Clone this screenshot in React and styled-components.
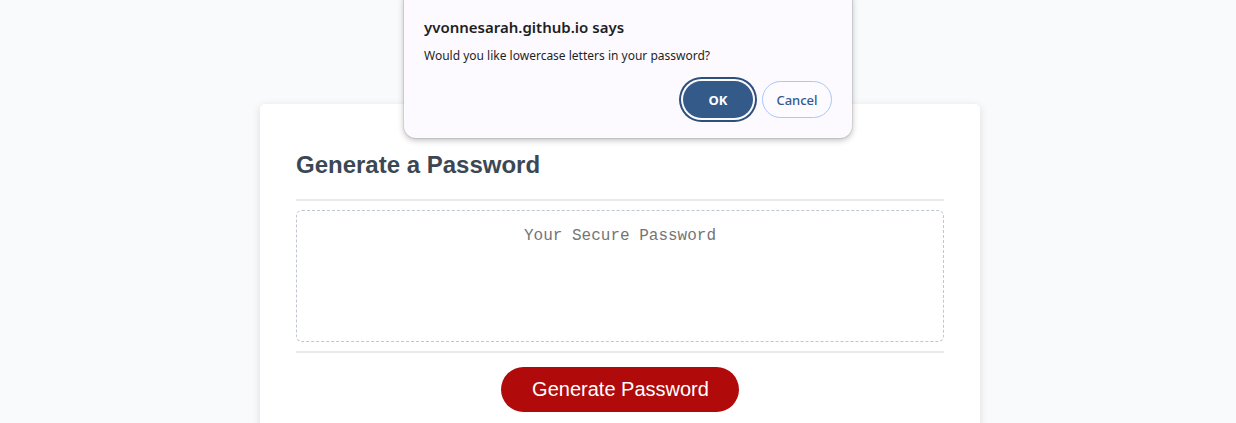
import React from "react";
import styled, { createGlobalStyle } from "styled-components";

const GlobalStyle = createGlobalStyle`
    html, body {
        margin: 0;
        padding: 0;
        background-color: #f9fafb;
        font-family: "Liberation Sans", Arial, sans-serif;
    }
`;

const Page = styled.div`
    position: relative;
    min-height: 423px;
    padding-left: 4px;
    overflow: hidden;
`;

const Card = styled.div`
    width: 720px;
    box-sizing: border-box;
    margin: 104px auto 0;
    padding: 0 36px 30px;
    background-color: #fff;
    border-radius: 5px;
    box-shadow: rgba(0, 0, 0, 0.12) 0px 2px 8px 0px;
    color: #3b4854;
`;

const CardHeader = styled.div`
    padding-top: 47px;
    &::after {
        content: "";
        display: block;
        height: 2px;
        margin-top: 20px;
        background: #e7e9eb;
    }
`;

const Title = styled.h2`
    margin: 0;
    font-size: 24px;
    line-height: 28px;
    font-weight: 700;
`;

const CardBody = styled.div`
    padding: 9px 0;
`;

const Output = styled.textarea`
    display: block;
    width: 100%;
    height: 132px;
    box-sizing: border-box;
    padding: 16px 15px;
    border: 1px dashed #c0c7cf;
    border-radius: 6px;
    resize: none;
    overflow: hidden;
    text-align: center;
    font-family: "Liberation Mono", "Courier New", monospace;
    font-size: 16px;
    color: #333;
    &::placeholder {
        color: #757575;
    }
`;

const CardFooter = styled.div`
    text-align: center;
    &::before {
        content: "";
        display: block;
        height: 2px;
        background: #e7e9eb;
        margin-bottom: 14px;
    }
`;

const GenerateButton = styled.button`
    height: 45px;
    padding: 0 30px 0 31px;
    border: none;
    border-radius: 25px;
    background-color: #b00a0a;
    color: #fff;
    font-family: "Liberation Sans", Arial, sans-serif;
    font-size: 20px;
    line-height: 45px;
    cursor: pointer;
`;

const Dialog = styled.div`
    position: absolute;
    top: -12px;
    left: calc(50% - 214px);
    width: 448px;
    box-sizing: border-box;
    padding: 29px 20px 20px;
    background-color: #fcfaff;
    border-radius: 12px;
    box-shadow: 0 0 0 1px rgba(0, 0, 0, 0.07), 0 2px 6px rgba(0, 0, 0, 0.28);
    font-family: "Noto Sans", "Open Sans", sans-serif;
    color: #1f1f1f;
`;

const DialogTitle = styled.div`
    font-size: 15px;
    line-height: 20px;
    font-weight: 600;
`;

const DialogMessage = styled.div`
    margin-top: 9px;
    font-size: 12px;
    line-height: 20px;
`;

const DialogActions = styled.div`
    display: flex;
    justify-content: flex-end;
    gap: 9px;
    margin-top: 15px;
`;

const DialogButton = styled.button`
    height: 37px;
    width: ${p => (p.primary ? "70px" : "70px")};
    padding: 0;
    border-radius: 19px;
    font-family: "Noto Sans", "Open Sans", sans-serif;
    font-size: 13px;
    font-weight: ${p => (p.primary ? 700 : 500)};
    color: ${p => (p.primary ? "#fff" : "#345a8a")};
    background-color: ${p => (p.primary ? "#345a8a" : "#fdfbff")};
    border: ${p => (p.primary ? "none" : "1px solid #a8c7fa")};
    box-shadow: ${p =>
        p.primary ? "0 0 0 2px #fcfaff, 0 0 0 4px #2d4f7c" : "none"};
    cursor: pointer;
`;

export default function App() {
    return (
        <Page>
            <GlobalStyle />
            <Card>
                <CardHeader>
                    <Title>Generate a Password</Title>
                </CardHeader>
                <CardBody>
                    <Output
                        readOnly
                        placeholder="Your Secure Password"
                        aria-label="Generated Password"
                    />
                </CardBody>
                <CardFooter>
                    <GenerateButton>Generate Password</GenerateButton>
                </CardFooter>
            </Card>

            <Dialog role="alertdialog">
                <DialogTitle>yvonnesarah.github.io says</DialogTitle>
                <DialogMessage>
                    Would you like lowercase letters in your password?
                </DialogMessage>
                <DialogActions>
                    <DialogButton primary>OK</DialogButton>
                    <DialogButton>Cancel</DialogButton>
                </DialogActions>
            </Dialog>
        </Page>
    );
}
